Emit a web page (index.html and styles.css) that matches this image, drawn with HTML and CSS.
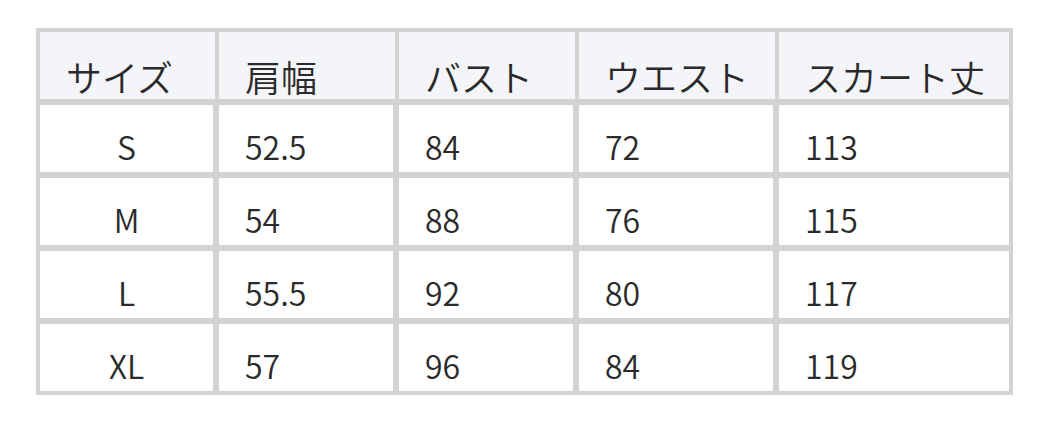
FILE: index.html
```html
<!DOCTYPE html>
<html lang="ja">
<head>
<meta charset="utf-8">
<link rel="stylesheet" href="styles.css">
</head>
<body>
<div class="size-table">
  <div class="cell head">サイズ</div>
  <div class="cell head">肩幅</div>
  <div class="cell head">バスト</div>
  <div class="cell head">ウエスト</div>
  <div class="cell head last">スカート丈</div>

  <div class="cell center">S</div>
  <div class="cell">52.5</div>
  <div class="cell">84</div>
  <div class="cell">72</div>
  <div class="cell">113</div>

  <div class="cell center">M</div>
  <div class="cell">54</div>
  <div class="cell">88</div>
  <div class="cell">76</div>
  <div class="cell">115</div>

  <div class="cell center">L</div>
  <div class="cell">55.5</div>
  <div class="cell">92</div>
  <div class="cell">80</div>
  <div class="cell">117</div>

  <div class="cell center">XL</div>
  <div class="cell">57</div>
  <div class="cell">96</div>
  <div class="cell">84</div>
  <div class="cell">119</div>
</div>
</body>
</html>
```

FILE: styles.css
```css
html, body {
  margin: 0;
  padding: 0;
  background: #ffffff;
}

body {
  padding: 28px 0 0 36px;
  font-family: "Noto Sans CJK JP", "Noto Sans", sans-serif;
  font-weight: 350;
  color: #2a2a2a;
}

.size-table {
  display: grid;
  grid-template-columns: 173px 174px 174px 194px 230px;
  grid-auto-rows: 67px;
  column-gap: 6px;
  row-gap: 6px;
  width: max-content;
  padding: 4px 4px 4px 4px;
  background: #d3d3d3;
}

.cell {
  background: #ffffff;
  display: flex;
  align-items: flex-end;
  padding: 0 0 10px 26px;
  font-size: 32px;
  line-height: 1;
}

.cell.center {
  justify-content: center;
  padding-left: 0;
}

.cell.head {
  background: #f4f5f9;
  font-size: 36px;
  padding-bottom: 5px;
  margin-right: -2px;
}

.cell.head.last {
  margin-right: 0;
}
```
